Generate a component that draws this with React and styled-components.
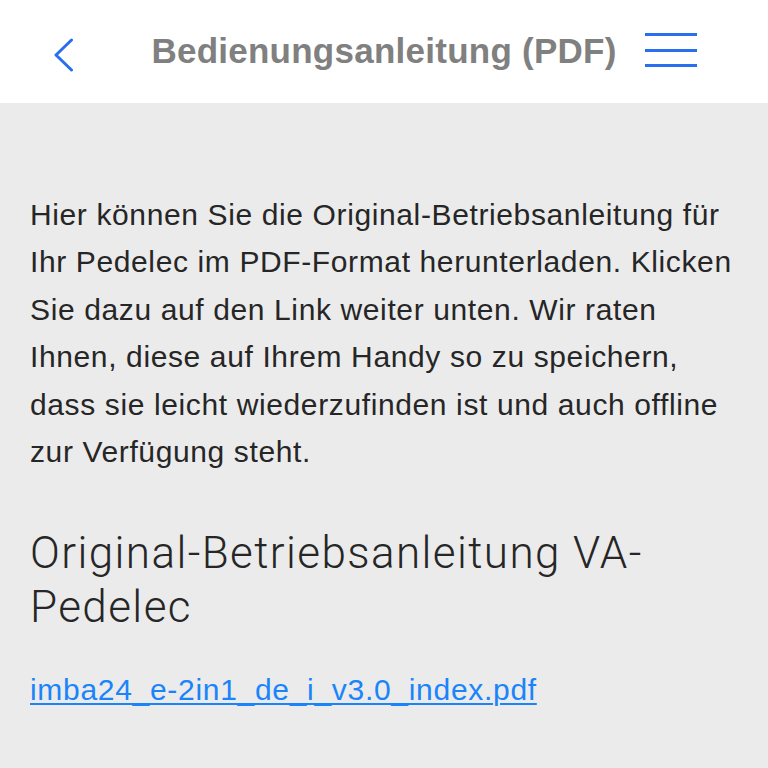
import React from "react";
import styled, { createGlobalStyle } from "styled-components";

const GlobalStyle = createGlobalStyle`
  html, body {
    margin: 0;
    padding: 0;
    background: #ebebeb;
  }
  body {
    font-family: "Liberation Sans", Arial, sans-serif;
  }
`;

export default function App() {
  return (
    <>
      <GlobalStyle />
      <Page>
        <Header>
          <BackButton aria-label="Zurück">
            <svg width="20" height="34" viewBox="0 0 20 34">
              <path
                d="M17.5 2 L2 17 L17.5 32"
                fill="none"
                stroke="#2a6ef0"
                strokeWidth="3"
                strokeLinecap="round"
                strokeLinejoin="round"
              />
            </svg>
          </BackButton>
          <Title>Bedienungsanleitung (PDF)</Title>
          <MenuButton aria-label="Menü">
            <MenuLine />
            <MenuLine />
            <MenuLine />
          </MenuButton>
        </Header>
        <Content>
          <Intro>
            Hier können Sie die Original-Betriebsanleitung für Ihr Pedelec im
            PDF-Format herunterladen. Klicken Sie dazu auf den Link weiter
            unten. Wir raten Ihnen, diese auf Ihrem Handy so zu speichern, dass
            sie leicht wiederzufinden ist und auch offline zur Verfügung steht.
          </Intro>
          <SectionTitle>Original-Betriebsanleitung VA-Pedelec</SectionTitle>
          <PdfLink href="#">imba24_e-2in1_de_i_v3.0_index.pdf</PdfLink>
        </Content>
      </Page>
    </>
  );
}

const Page = styled.div`
  min-height: 768px;
  background: #ebebeb;
`;

const Header = styled.header`
  height: 103px;
  background: #ffffff;
  display: grid;
  grid-template-columns: 1fr auto 1fr;
  align-items: center;
  padding: 0 54px;
  box-sizing: border-box;
`;

const BackButton = styled.div`
  justify-self: start;
  display: flex;
  align-items: center;
  margin-top: 6px;
`;

const Title = styled.h1`
  margin: 0 0 2px;
  font-size: 35px;
  font-weight: bold;
  color: #808080;
  letter-spacing: 0.25px;
  white-space: nowrap;
`;

const MenuButton = styled.div`
  justify-self: end;
  width: 52px;
  margin-right: 17px;
  display: flex;
  flex-direction: column;
  gap: 12.5px;
  margin-bottom: 3px;
`;

const MenuLine = styled.span`
  display: block;
  height: 3px;
  background: #2a6ef0;
`;

const Content = styled.main`
  padding: 88px 30px 40px;
`;

const Intro = styled.p`
  margin: 0;
  font-size: 30px;
  line-height: 47.4px;
  letter-spacing: 0.62px;
  color: #262626;
`;

const SectionTitle = styled.h2`
  margin: 51px 0 0;
  font-family: Roboto, "Liberation Sans", sans-serif;
  font-weight: 300;
  font-size: 44px;
  line-height: 54px;
  letter-spacing: 1.4px;
  color: #262626;
`;

const PdfLink = styled.a`
  display: inline-block;
  margin-top: 36px;
  font-size: 30px;
  line-height: 40px;
  letter-spacing: 0.7px;
  color: #1a84fa;
  text-decoration: underline;
  text-underline-offset: 3px;
  text-decoration-thickness: 1.5px;
`;
